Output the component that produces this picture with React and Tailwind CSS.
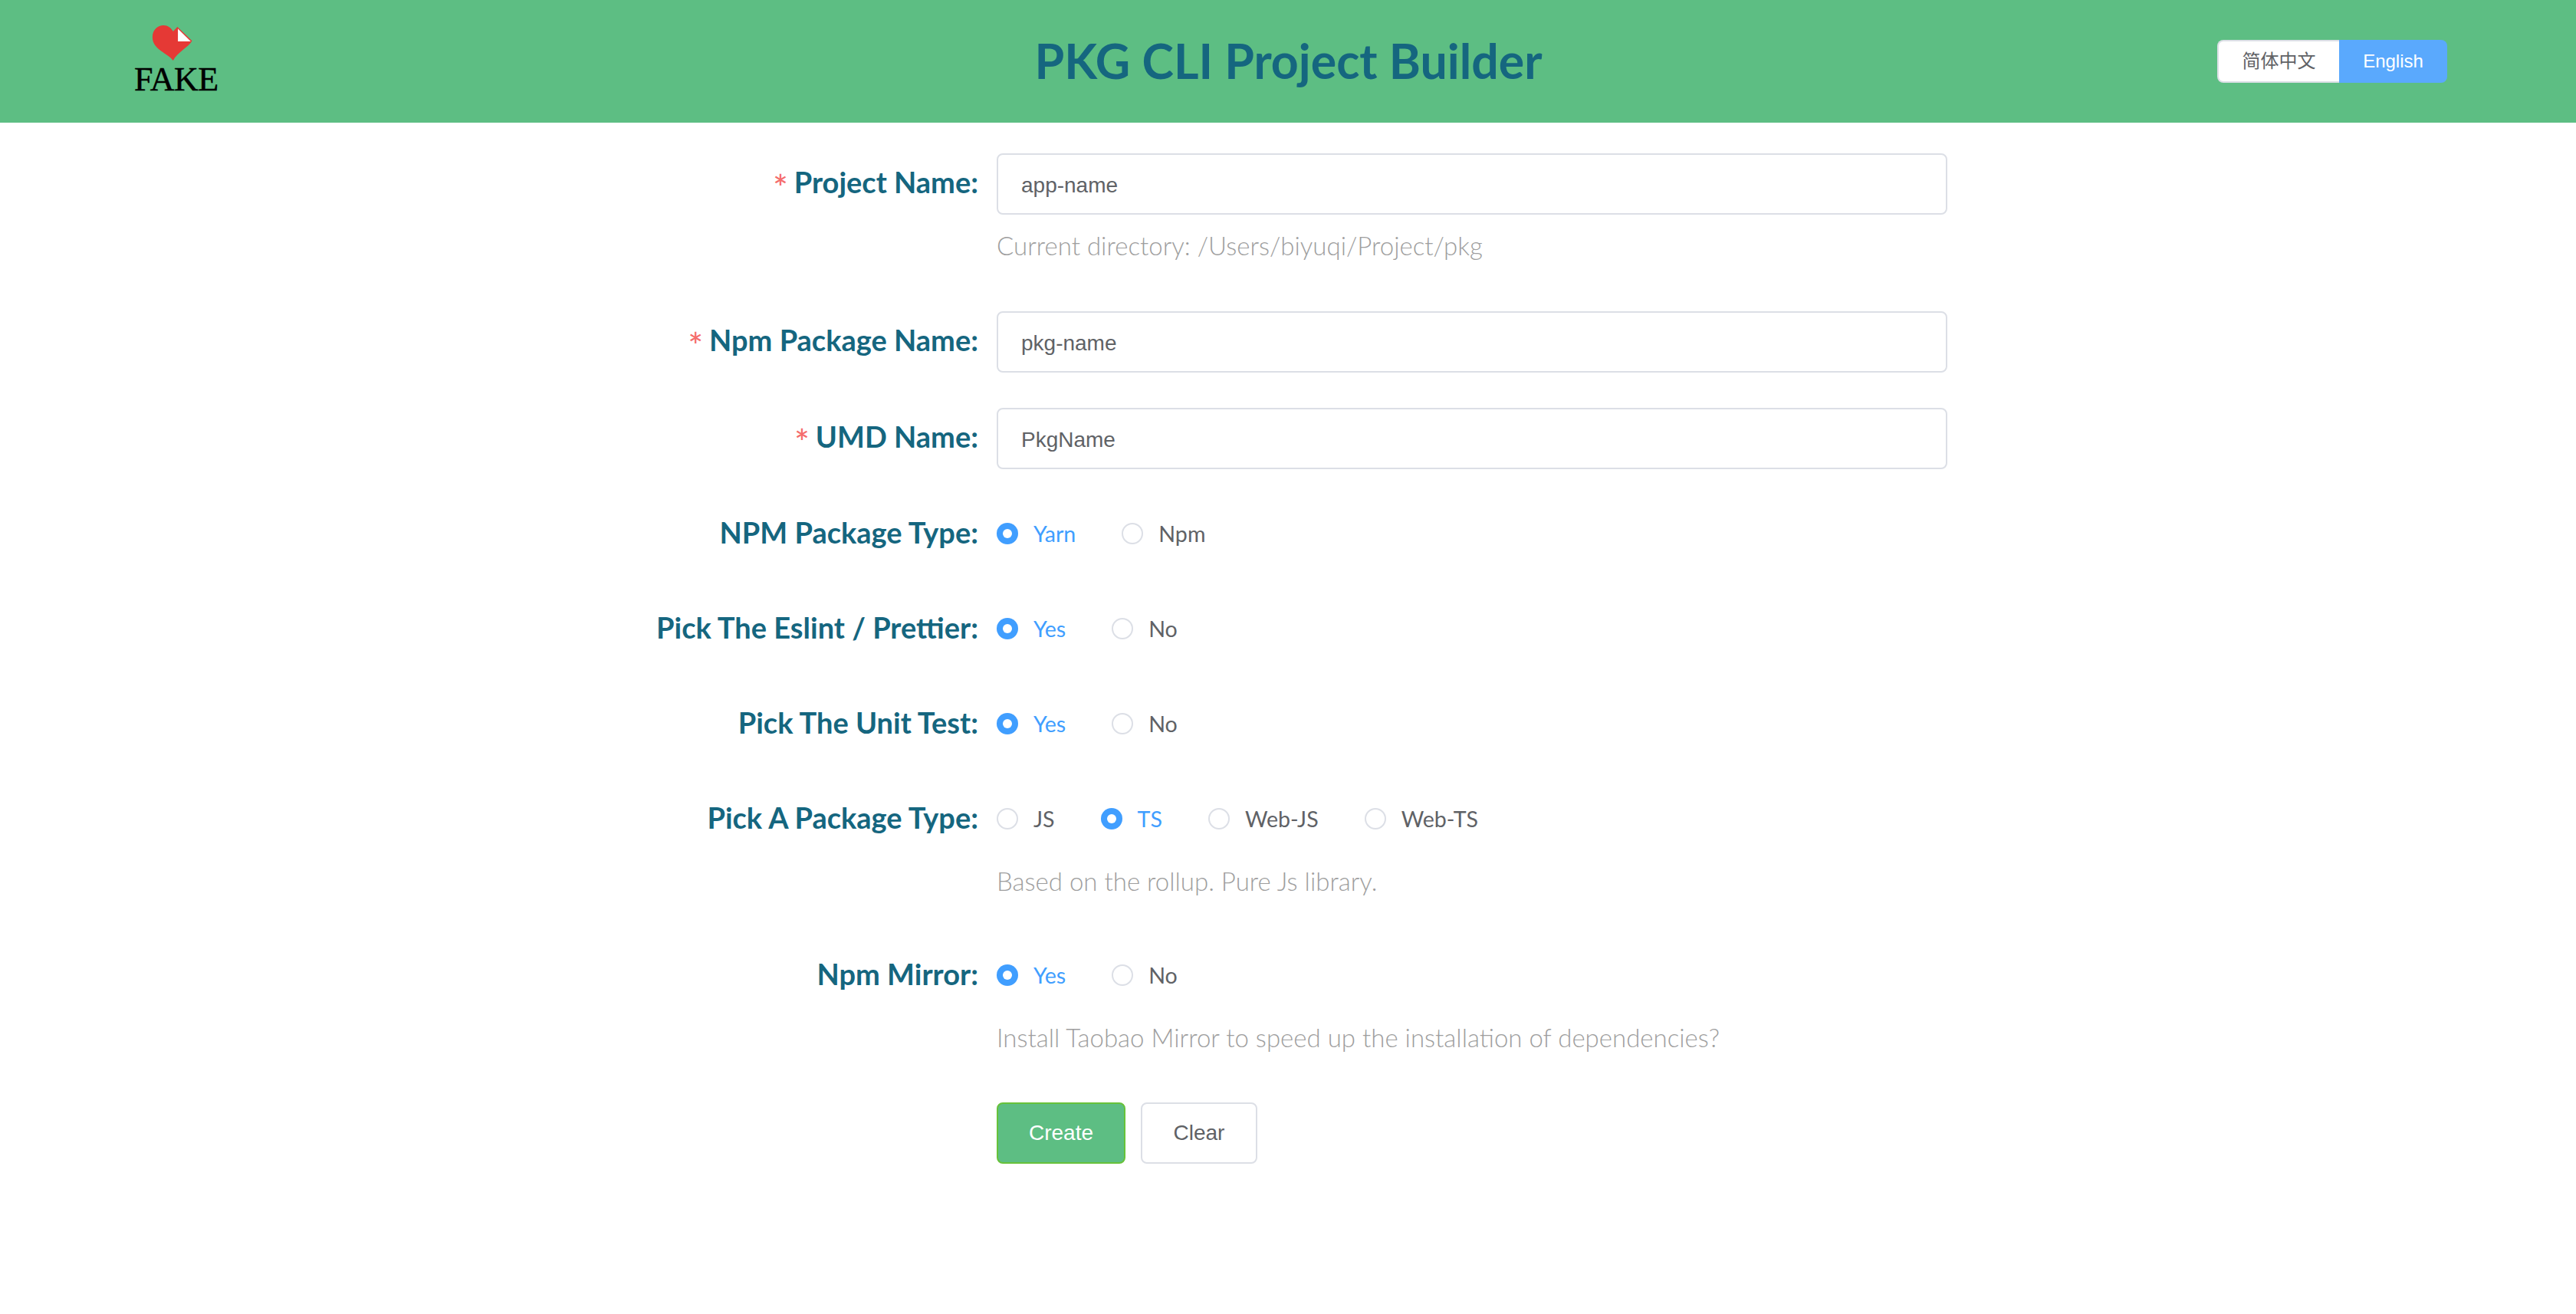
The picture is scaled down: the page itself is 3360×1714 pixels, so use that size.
const LATO = "font-['Lato','Noto_Sans',sans-serif]";

const Logo = () => (
  <div className="flex w-[110px] flex-col">
    <svg
      viewBox="235 98 158 140"
      className="ml-[23px] mt-[33px] h-[46px] w-[53px]"
    >
      <path
        fill="#e53935"
        d="M318 238C300 210 236 195 236 145C236 115 258 98 280 98C296 98 310 108 318 122L335 104L393 160C380 185 335 205 318 238Z"
      />
      <path fill="#fff" d="M337 112L388 162L337 162Z" />
    </svg>
    <span className="mt-px font-['Liberation_Serif',serif] text-[44px] leading-[48px] tracking-[-0.5px] text-black [-webkit-text-stroke:0.5px_black]">
      FAKE
    </span>
  </div>
);

const Header = () => (
  <header className="grid h-40 grid-cols-[1fr_auto_1fr] items-center bg-[#5dbe83] pl-[175px] pr-[168px]">
    <div className="h-full">
      <Logo />
    </div>
    <h1 className={`${LATO} -mt-0.5 -translate-x-[3px] text-[62.6px] font-bold leading-none text-[#15667f]`}>
      PKG CLI Project Builder
    </h1>
    <div className="flex justify-self-end font-['Liberation_Sans','Noto_Sans_CJK_SC',sans-serif] text-2xl">
      <span className="flex h-14 w-[159px] items-center justify-center rounded-l-lg border-2 border-r-0 border-[#dcdfe6] bg-white text-[#606266]">
        简体中文
      </span>
      <span className="flex h-14 w-[141px] items-center justify-center rounded-r-lg bg-[#5aa9fd] text-white">
        English
      </span>
    </div>
  </header>
);

const Label = ({ required, className = "leading-[74px]", children }) => (
  <label
    className={`${LATO} ${className} h-20 w-[480px] shrink-0 pr-6 text-right text-[38px] font-bold text-[#15667f]`}
  >
    {required && (
      <span className="mr-2 align-[-10px] text-[46px] font-medium leading-none text-[#f56c6c]">*</span>
    )}
    {children}
  </label>
);

const Help = ({ children, className = "h-[82px]" }) => (
  <p className={`${LATO} ${className} flex items-center text-[33px] font-light text-[#9e9e9e]`}>
    {children}
  </p>
);

const TextRow = ({ label, value, help }) => (
  <div className="flex">
    <Label required>{label}</Label>
    <div className="w-[1240px]">
      <input
        readOnly
        value={value}
        className="block h-20 w-full rounded-lg border-2 border-[#dcdfe6] px-[30px] pt-1 font-['Liberation_Sans',sans-serif] text-[28px] text-[#606266] outline-none"
      />
      {help && <Help>{help}</Help>}
    </div>
  </div>
);

const Radio = ({ text, checked }) => (
  <span className={`${LATO} mr-[60px] flex items-center gap-5 text-[28.6px] ${checked ? "text-[#409eff]" : "text-[#606266]"}`}>
    {checked ? (
      <span className="grid size-7 place-items-center rounded-full bg-[#409eff]">
        <span className="size-3 rounded-full bg-white" />
      </span>
    ) : (
      <span className="size-7 rounded-full border-2 border-[#dcdfe6] bg-white" />
    )}
    {text}
  </span>
);

const RadioRow = ({ label, options, selected, help }) => (
  <div className="flex">
    <Label className="leading-[76px]">{label}</Label>
    <div className="w-[1240px]">
      <div className="flex h-20 items-center">
        {options.map((option) => (
          <Radio key={option} text={option} checked={option === selected} />
        ))}
      </div>
      {help && <Help className="h-20 pt-1">{help}</Help>}
    </div>
  </div>
);

export default function App() {
  return (
    <div className="min-h-screen bg-white">
      <Header />
      <form className="mx-auto flex w-[1720px] flex-col gap-11 pt-10">
        <TextRow
          label="Project Name:"
          value="app-name"
          help="Current directory: /Users/biyuqi/Project/pkg"
        />
        <div className="flex flex-col gap-[46px]">
          <TextRow label="Npm Package Name:" value="pkg-name" />
          <TextRow label="UMD Name:" value="PkgName" />
        </div>
        <RadioRow label="NPM Package Type:" options={["Yarn", "Npm"]} selected="Yarn" />
        <RadioRow label="Pick The Eslint / Prettier:" options={["Yes", "No"]} selected="Yes" />
        <RadioRow label="Pick The Unit Test:" options={["Yes", "No"]} selected="Yes" />
        <RadioRow
          label="Pick A Package Type:"
          options={["JS", "TS", "Web-JS", "Web-TS"]}
          selected="TS"
          help="Based on the rollup. Pure Js library."
        />
        <RadioRow
          label="Npm Mirror:"
          options={["Yes", "No"]}
          selected="Yes"
          help="Install Taobao Mirror to speed up the installation of dependencies?"
        />
        <div className="mt-0.5 flex gap-5 pl-[480px] font-['Liberation_Sans',sans-serif] text-[28px]">
          <button type="button" className="h-20 w-[168px] rounded-lg border-2 border-[#67c23a] bg-[#5dbe83] text-white">
            Create
          </button>
          <button type="button" className="h-20 w-[152px] rounded-lg border-2 border-[#dcdfe6] bg-white text-[#606266]">
            Clear
          </button>
        </div>
      </form>
    </div>
  );
}
